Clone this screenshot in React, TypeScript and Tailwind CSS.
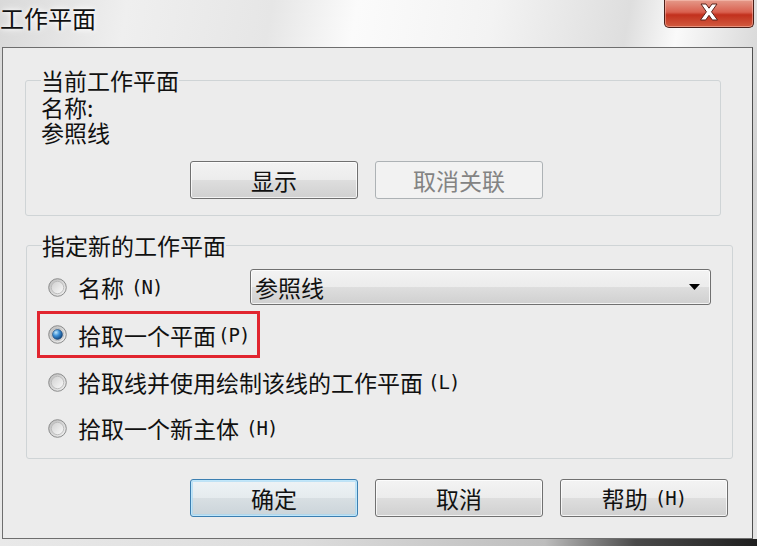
import React from 'react';

const font = "font-['Noto_Sans_CJK_SC','Noto_Sans',sans-serif]";

const Key = ({ k }: { k: string }) => (
  <span className="ml-[2px] font-['DejaVu_Sans_Mono',monospace] text-[19px] tracking-[-1px] text-[#111]">({k})</span>
);

const Radio = ({ id, checked = false }: { id: string; checked?: boolean }) => (
  <svg width="19" height="19" viewBox="0 0 19 19" className="shrink-0">
    <defs>
      <linearGradient id={`ring-${id}`} x1="0" y1="0" x2="1" y2="1">
        <stop offset="0" stopColor="#b9b9b9" />
        <stop offset="1" stopColor="#f4f4f4" />
      </linearGradient>
      <linearGradient id={`in-${id}`} x1="0" y1="0" x2="1" y2="1">
        <stop offset="0" stopColor="#cfcfcf" />
        <stop offset="1" stopColor="#fbfbfb" />
      </linearGradient>
      <radialGradient id={`dot-${id}`} cx="0.35" cy="0.3" r="0.75">
        <stop offset="0" stopColor="#bfe7fb" />
        <stop offset="0.45" stopColor="#3c8fd6" />
        <stop offset="1" stopColor="#0f3f75" />
      </radialGradient>
    </defs>
    <circle cx="9.5" cy="9.5" r="8.8" fill={`url(#ring-${id})`} stroke="#8b8c8c" strokeWidth="1" />
    <circle cx="9.5" cy="9.5" r="6.2" fill={`url(#in-${id})`} stroke="#b5b5b5" strokeWidth="0.8" />
    {checked && <circle cx="9.5" cy="9.5" r="5" fill={`url(#dot-${id})`} stroke="#143e6d" strokeWidth="0.6" />}
  </svg>
);

const btnBase =
  'flex h-[38px] w-[168px] items-center justify-center rounded-[3px] border text-[23px] leading-none';
const btnNormal =
  'border-[#707070] text-[#111] bg-[linear-gradient(to_bottom,#f3f3f3_0%,#ececec_50%,#dedede_50%,#d0d0d0_100%)] shadow-[inset_0_0_0_1px_rgba(255,255,255,0.75)]';
const btnDefault =
  'border-[#3c7fb1] text-[#111] bg-[linear-gradient(to_bottom,#eef3f6_0%,#e5ebee_50%,#d8dfe3_50%,#cbd4d9_100%)] shadow-[inset_0_0_0_1px_#bfe6fa,inset_0_0_0_2px_rgba(160,215,245,0.6)]';
const btnDisabled = 'border-[#adb2b5] bg-[#f2f2f2] text-[#838383]';

export default function App() {
  return (
    <div
      className={`${font} flex h-[546px] w-[757px] flex-col overflow-hidden bg-[linear-gradient(100deg,#d9d9d9_0%,#efefef_15%,#e6e6e6_32%,#fbfbfb_42%,#f3f3f3_58%,#dedede_74%,#fafafa_80%,#d2d2d2_92%,#e4e4e4_100%)] text-[#111]`}
    >
      {/* title bar */}
      <div className="flex h-[47px] shrink-0 items-start justify-between">
        <div className="mt-[6px] text-[24px] leading-[24px] [text-shadow:0_0_8px_#fff,0_0_4px_#fff]">工作平面</div>
        <div className="mr-[3px] flex h-[28px] w-[90px] items-center justify-center rounded-b-[5px] border border-t-0 border-[#4a1e18] bg-[linear-gradient(to_bottom,#e59a8a_0%,#d9604f_45%,#c2301d_55%,#d25b3f_100%)] shadow-[inset_0_0_0_1px_rgba(255,210,200,0.45)]">
          <svg width="20" height="18" viewBox="0 0 20 18" className="-mt-[4px]">
            <path
              d="M2 1h5l3 4.2L13 1h5l-5.5 7.8L18.5 17h-5.2L10 12.3 6.7 17H1.5l5.9-8.2z"
              fill="#fff"
              stroke="#5a231b"
              strokeWidth="1"
              strokeLinejoin="round"
            />
          </svg>
        </div>
      </div>

      {/* client area */}
      <div className="ml-[2px] flex h-[492px] w-[751px] shrink-0 flex-col border border-[#6e6e6e] border-r-[#4f4f4f] bg-[#ececec]">
        <fieldset className="ml-[22px] mt-[20px] w-[696px] rounded-[3px] border border-[#cfd4d6] px-[15px] pb-[16px] pt-[3px]">
          <legend className="px-0 text-[23px] leading-[24px]">当前工作平面</legend>
          <div className="text-[23px] leading-[25px]">名称:</div>
          <div className="text-[23px] leading-[25px]">参照线</div>
          <div className="mt-[16px] flex gap-[17px] pl-[149px]">
            <div className={`${btnBase} ${btnNormal}`}>显示</div>
            <div className={`${btnBase} ${btnDisabled}`}>取消关联</div>
          </div>
        </fieldset>

        <fieldset className="ml-[23px] mt-[17px] w-[707px] rounded-[3px] border border-[#cfd4d6] pl-[15px] pb-[8px] pt-[12px] text-[23px] leading-[24px]">
          <legend className="px-0 text-[23px] leading-[24px]">指定新的工作平面</legend>
          <div className="flex h-[36px] items-center">
            <div className="flex w-[208px] items-center pl-[6px]">
              <Radio id="a" />
              <span className="ml-[11px]">名称</span>
              <span className="ml-[5px]" />
              <Key k="N" />
            </div>
            <div className="flex h-[36px] w-[461px] items-center justify-between rounded-[3px] border border-[#707070] bg-[linear-gradient(to_bottom,#f3f3f3_0%,#ececec_50%,#dedede_50%,#d0d0d0_100%)] pl-[4px] pr-[10px] shadow-[inset_0_0_0_1px_rgba(255,255,255,0.75)]">
              <span>参照线</span>
              <svg width="11" height="6" viewBox="0 0 11 6">
                <path d="M0 0h11L5.5 6z" fill="#000" />
              </svg>
            </div>
          </div>
          <div className="-ml-[5px] mt-[6px] flex h-[47px] w-[223px] items-center border-[3px] border-[#e1252f] pl-[8px]">
            <Radio id="b" checked />
            <span className="ml-[11px]">拾取一个平面</span>
            <Key k="P" />
          </div>
          <div className="flex h-[48px] items-center pl-[6px]">
            <Radio id="c" />
            <span className="ml-[11px]">拾取线并使用绘制该线的工作平面</span>
            <span className="ml-[3px]" />
            <Key k="L" />
          </div>
          <div className="flex h-[44px] items-center pl-[6px]">
            <Radio id="d" />
            <span className="ml-[11px]">拾取一个新主体</span>
            <span className="ml-[5px]" />
            <Key k="H" />
          </div>
        </fieldset>

        <div className="mt-[20px] flex justify-end gap-[17px] pr-[24px]">
          <div className={`${btnBase} ${btnDefault}`}>确定</div>
          <div className={`${btnBase} ${btnNormal}`}>取消</div>
          <div className={`${btnBase} ${btnNormal}`}>
            帮助
            <span className="ml-[5px]" />
            <Key k="H" />
          </div>
        </div>
      </div>

      {/* bottom frame */}
      <div className="flex-1 bg-[linear-gradient(to_right,#e9e9e9_0%,#dcdcdc_40%,#bdbdbd_72%,#4a4a4a_84%,#1f1f1f_100%)]" />
    </div>
  );
}
